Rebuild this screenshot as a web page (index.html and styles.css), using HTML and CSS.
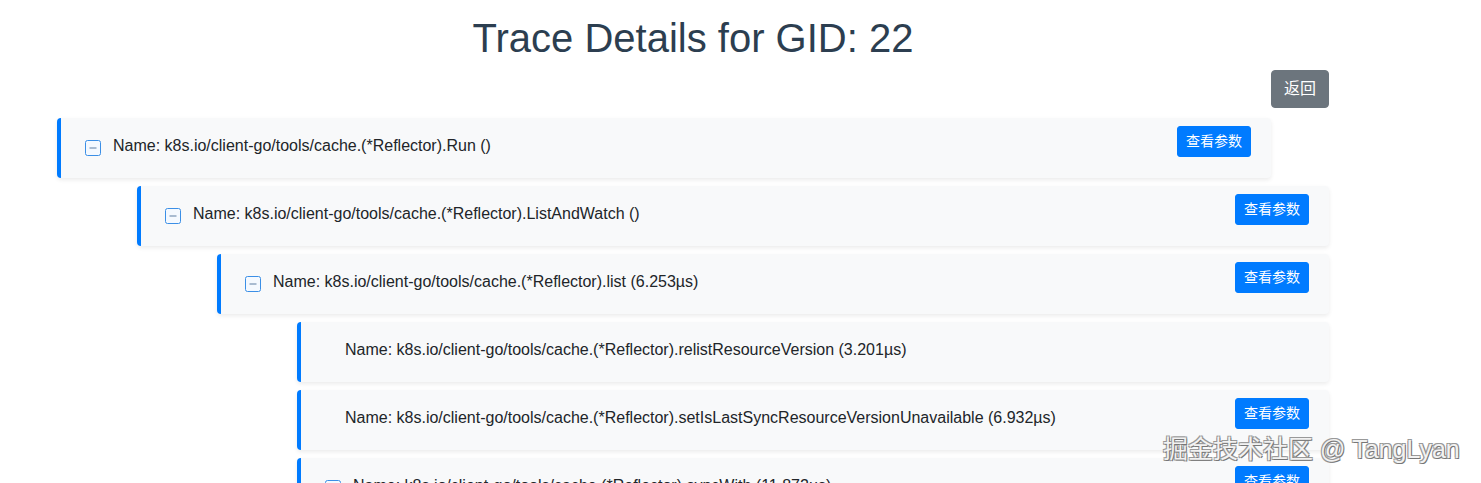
FILE: index.html
```html
<!DOCTYPE html>
<html lang="zh">
<head>
<meta charset="utf-8">
<title>Trace Details</title>
<link rel="stylesheet" href="styles.css">
</head>
<body>
<div class="page">
  <div class="wrap">
    <h1 class="title">Trace Details for GID: 22</h1>
    <div class="toolbar"><button class="btn btn-back">返回</button></div>
    <div class="tree">
      <div class="card root">
        <span class="toggle"><svg viewBox="0 0 16 16" width="16" height="16"><rect x="0.5" y="0.5" width="15" height="15" rx="2" fill="#f4f9ff" stroke="#3b8fe6"/><path d="M4.5 8h7" stroke="#7f9ab8" stroke-width="1.3"/></svg></span>
        <span class="name">Name: k8s.io/client-go/tools/cache.(*Reflector).Run ()</span>
        <button class="btn btn-param">查看参数</button>
      </div>
      <div class="card lvl1">
        <span class="toggle"><svg viewBox="0 0 16 16" width="16" height="16"><rect x="0.5" y="0.5" width="15" height="15" rx="2" fill="#f4f9ff" stroke="#3b8fe6"/><path d="M4.5 8h7" stroke="#7f9ab8" stroke-width="1.3"/></svg></span>
        <span class="name">Name: k8s.io/client-go/tools/cache.(*Reflector).ListAndWatch ()</span>
        <button class="btn btn-param">查看参数</button>
      </div>
      <div class="card lvl2">
        <span class="toggle"><svg viewBox="0 0 16 16" width="16" height="16"><rect x="0.5" y="0.5" width="15" height="15" rx="2" fill="#f4f9ff" stroke="#3b8fe6"/><path d="M4.5 8h7" stroke="#7f9ab8" stroke-width="1.3"/></svg></span>
        <span class="name">Name: k8s.io/client-go/tools/cache.(*Reflector).list (6.253µs)</span>
        <button class="btn btn-param">查看参数</button>
      </div>
      <div class="card lvl3">
        <span class="name leaf">Name: k8s.io/client-go/tools/cache.(*Reflector).relistResourceVersion (3.201µs)</span>
      </div>
      <div class="card lvl3">
        <span class="name leaf">Name: k8s.io/client-go/tools/cache.(*Reflector).setIsLastSyncResourceVersionUnavailable (6.932µs)</span>
        <button class="btn btn-param">查看参数</button>
      </div>
      <div class="card lvl3">
        <span class="toggle"><svg viewBox="0 0 16 16" width="16" height="16"><rect x="0.5" y="0.5" width="15" height="15" rx="2" fill="#f4f9ff" stroke="#3b8fe6"/><path d="M4.5 8h7" stroke="#7f9ab8" stroke-width="1.3"/></svg></span>
        <span class="name">Name: k8s.io/client-go/tools/cache.(*Reflector).syncWith (11.872µs)</span>
        <button class="btn btn-param">查看参数</button>
      </div>
    </div>
  </div>
</div>
<div class="watermark">掘金技术社区 @ TangLyan</div>
</body>
</html>
```

FILE: styles.css
```css
html, body {
  margin: 0;
  padding: 0;
  background: #fff;
}
body {
  font-family: "Liberation Sans", Arial, "Noto Sans CJK SC", sans-serif;
  color: #212529;
  overflow: hidden;
}
.page {
  padding-top: 15px;
}
.title {
  margin: 0;
  font-size: 40px;
  font-weight: 400;
  line-height: 46px;
  text-align: center;
  color: #2c3e50;
}
.wrap {
  margin-left: 57px;
  width: 1272px;
}
.toolbar {
  display: flex;
  justify-content: flex-end;
  margin-top: 9px;
  margin-bottom: 10px;
}
.btn {
  font-family: "Liberation Sans", Arial, "Noto Sans CJK SC", sans-serif;
  border: 1px solid transparent;
  color: #fff;
  cursor: pointer;
  font-weight: 400;
}
.btn-back {
  background: #6c757d;
  border-color: #6c757d;
  font-size: 16px;
  line-height: 24px;
  padding: 6px 12px;
  border-radius: 4px;
}
.btn-param {
  background: #007bff;
  border-color: #007bff;
  font-size: 14px;
  line-height: 21px;
  padding: 4px 8px;
  border-radius: 3px;
  margin-left: auto;
  align-self: flex-start;
  margin-top: 8px;
}
.tree {
  display: flex;
  flex-direction: column;
  gap: 8px;
}
.card {
  display: flex;
  align-items: center;
  height: 60px;
  box-sizing: border-box;
  background: #f8f9fa;
  border-left: 4px solid #007bff;
  border-radius: 4px;
  padding: 0 20px 4px 24px;
  box-shadow: 0 2px 4px rgba(0, 0, 0, 0.08);
}
.root {
  margin-right: 58px;
}
.lvl1 { margin-left: 80px; }
.lvl2 { margin-left: 160px; }
.lvl3 { margin-left: 240px; }
.toggle {
  display: flex;
  width: 16px;
  height: 16px;
  margin-right: 12px;
  margin-top: 3px;
}
.name {
  font-size: 16px;
  line-height: 24px;
  white-space: nowrap;
}
.name.leaf {
  margin-left: 20px;
}
.watermark {
  position: absolute;
  left: 1163px;
  top: 433px;
  font-size: 25px;
  line-height: 32px;
  color: #f2f2f2;
  font-family: "Liberation Sans", Arial, "Noto Sans CJK SC", sans-serif;
  text-shadow: 1px 1px 0 #777, -1px -1px 0 #999, 1px -1px 0 #999, -1px 1px 0 #999;
  white-space: nowrap;
}
```
